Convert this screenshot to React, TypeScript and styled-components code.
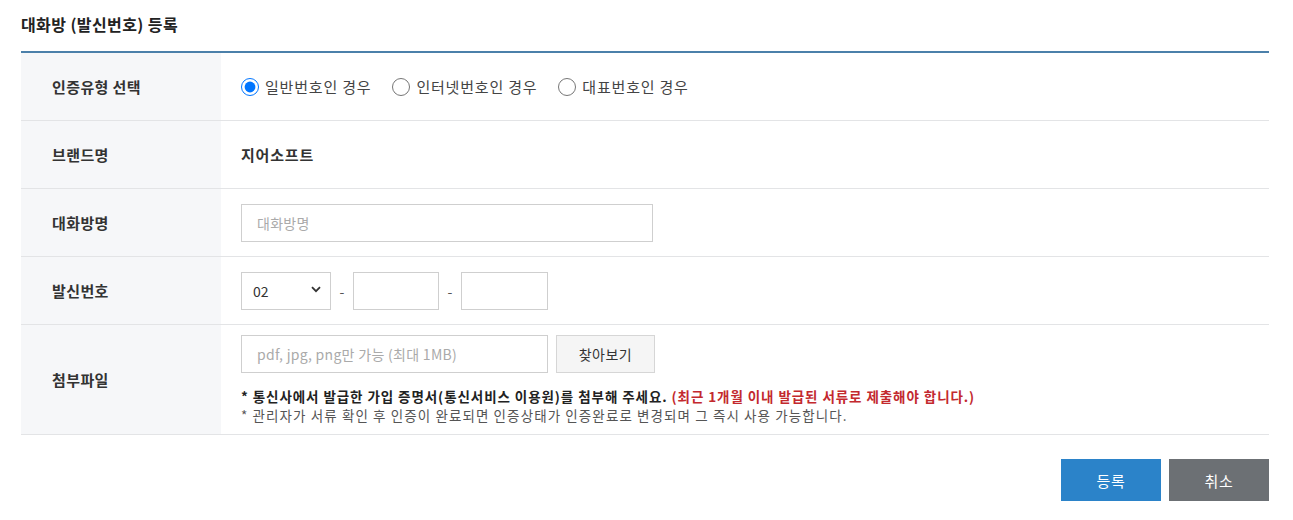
import styled, { createGlobalStyle } from "styled-components";

const GlobalStyle = createGlobalStyle`
  html, body {
    margin: 0;
    padding: 0;
    background: #fff;
  }
  body {
    font-family: "Noto Sans CJK KR", "Noto Sans", sans-serif;
    color: #222;
  }
  * { box-sizing: border-box; }
`;

const Page = styled.div`
  width: 1248px;
  margin-left: 21px;
`;

const Title = styled.h2`
  margin: 0;
  padding: 13px 0 15px;
  font-size: 16px;
  line-height: 23px;
  font-weight: 700;
  color: #222;
  letter-spacing: 0.4px;
`;

const Table = styled.div`
  border-top: 2px solid #4b80aa;
`;

const Row = styled.div<{ $tall?: boolean }>`
  display: grid;
  grid-template-columns: 200px 1fr;
  min-height: ${(p) => (p.$tall ? 110 : 68)}px;
  border-bottom: 1px solid #e3e4e6;
`;

const Label = styled.div`
  display: flex;
  align-items: center;
  padding-left: 31px;
  background: #f6f7f9;
  font-size: 15px;
  font-weight: 700;
  color: #333;
  letter-spacing: 0.4px;
`;

const Cell = styled.div`
  display: flex;
  flex-direction: column;
  justify-content: center;
  padding: 0 20px;
`;

const Line = styled.div`
  display: flex;
  align-items: center;
`;

const RadioLabel = styled.label`
  display: flex;
  align-items: center;
  gap: 6px;
  margin-right: 21px;
  font-size: 15px;
  color: #444;
  letter-spacing: 0.8px;
`;

const Radio = styled.input`
  width: 18px;
  height: 18px;
  margin: 0;
  accent-color: #0075ff;
`;

const Brand = styled.span`
  font-size: 15px;
  font-weight: 700;
  color: #333;
  letter-spacing: 0.8px;
`;

const TextInput = styled.input<{ $w: number }>`
  width: ${(p) => p.$w}px;
  height: 38px;
  border: 1px solid #cfcfcf;
  padding: 0 15px;
  font-family: inherit;
  font-size: 14px;
  color: #333;
  letter-spacing: 0.3px;
  outline: none;
  &::placeholder {
    color: #aaa;
  }
`;

const SelectWrap = styled.div`
  position: relative;
  width: 90px;
  height: 38px;
`;

const Select = styled.select`
  appearance: none;
  width: 100%;
  height: 100%;
  border: 1px solid #cfcfcf;
  background: #fff;
  padding: 0 11px;
  font-family: inherit;
  font-size: 14px;
  color: #333;
  outline: none;
`;

const Chevron = styled.svg`
  position: absolute;
  right: 10px;
  top: 14px;
  pointer-events: none;
`;

const Dash = styled.span`
  width: 22px;
  text-align: center;
  font-size: 14px;
  color: #555;
`;

const GrayButton = styled.button`
  width: 99px;
  height: 38px;
  margin-left: 8px;
  border: 1px solid #d6d6d6;
  background: #f5f5f5;
  font-family: inherit;
  font-size: 14px;
  color: #333;
  letter-spacing: 0.5px;
`;

const Notes = styled.div`
  margin-top: 14px;
  font-size: 13.5px;
  line-height: 19px;
  letter-spacing: 1.1px;
  white-space: nowrap;
`;

const NoteStrong = styled.p`
  margin: 0;
  font-weight: 700;
  color: #222;
  letter-spacing: 0.92px;
`;

const NoteRed = styled.span`
  color: #c3292e;
`;

const NoteSub = styled.p`
  margin: 0;
  color: #555;
`;

const Actions = styled.div`
  display: flex;
  justify-content: flex-end;
  gap: 8px;
  margin-top: 24px;
`;

const ActionButton = styled.button<{ $primary?: boolean }>`
  width: 100px;
  height: 42px;
  border: none;
  background: ${(p) => (p.$primary ? "#2b83c9" : "#6c7074")};
  color: #fff;
  font-family: inherit;
  font-size: 15px;
  letter-spacing: 0.8px;
`;

export default function App() {
  return (
    <Page>
      <GlobalStyle />
      <Title>대화방 (발신번호) 등록</Title>
      <Table>
        <Row>
          <Label>인증유형 선택</Label>
          <Cell>
            <Line>
              <RadioLabel>
                <Radio type="radio" name="type" defaultChecked />
                일반번호인 경우
              </RadioLabel>
              <RadioLabel>
                <Radio type="radio" name="type" />
                인터넷번호인 경우
              </RadioLabel>
              <RadioLabel>
                <Radio type="radio" name="type" />
                대표번호인 경우
              </RadioLabel>
            </Line>
          </Cell>
        </Row>
        <Row>
          <Label>브랜드명</Label>
          <Cell>
            <Brand>지어소프트</Brand>
          </Cell>
        </Row>
        <Row>
          <Label>대화방명</Label>
          <Cell>
            <TextInput $w={412} placeholder="대화방명" />
          </Cell>
        </Row>
        <Row>
          <Label>발신번호</Label>
          <Cell>
            <Line>
              <SelectWrap>
                <Select defaultValue="02">
                  <option>02</option>
                  <option>031</option>
                  <option>032</option>
                </Select>
                <Chevron width="10" height="7" viewBox="0 0 10 7">
                  <path d="M1 1.2 5 5.2 9 1.2" fill="none" stroke="#333" strokeWidth="1.8" />
                </Chevron>
              </SelectWrap>
              <Dash>-</Dash>
              <TextInput $w={86} />
              <Dash>-</Dash>
              <TextInput $w={87} />
            </Line>
          </Cell>
        </Row>
        <Row $tall>
          <Label>첨부파일</Label>
          <Cell>
            <Line>
              <TextInput $w={307} placeholder="pdf, jpg, png만 가능 (최대 1MB)" />
              <GrayButton>찾아보기</GrayButton>
            </Line>
            <Notes>
              <NoteStrong>
                * 통신사에서 발급한 가입 증명서(통신서비스 이용원)를 첨부해 주세요.{" "}
                <NoteRed>(최근 1개월 이내 발급된 서류로 제출해야 합니다.)</NoteRed>
              </NoteStrong>
              <NoteSub>
                * 관리자가 서류 확인 후 인증이 완료되면 인증상태가 인증완료로 변경되며 그 즉시 사용 가능합니다.
              </NoteSub>
            </Notes>
          </Cell>
        </Row>
      </Table>
      <Actions>
        <ActionButton $primary>등록</ActionButton>
        <ActionButton>취소</ActionButton>
      </Actions>
    </Page>
  );
}
